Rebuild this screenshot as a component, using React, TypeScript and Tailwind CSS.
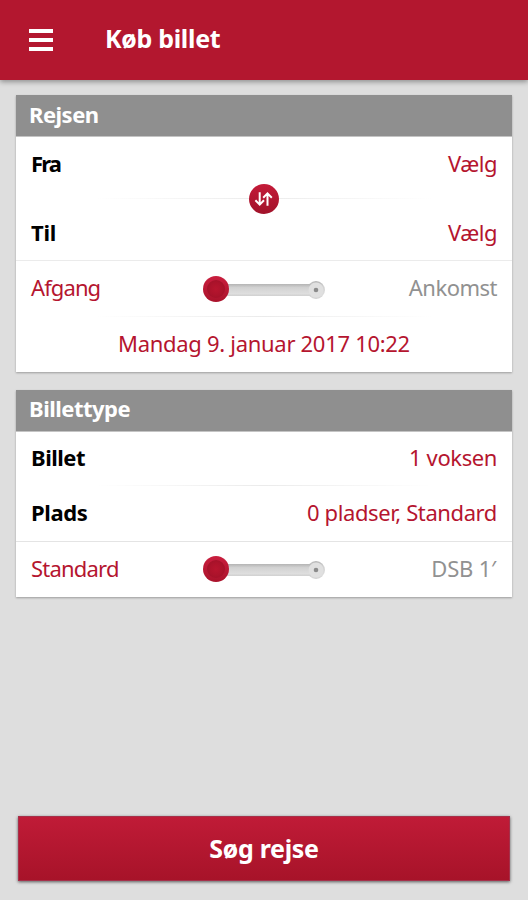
import { useState, type ReactNode } from "react";
import clsx from "clsx";

function Card({
  title,
  titleClassName = "pb-[4px]",
  children,
}: {
  title: ReactNode;
  titleClassName?: string;
  children: ReactNode;
}) {
  return (
    <section className="bg-white shadow-[0_1px_2px_rgba(0,0,0,0.3)]">
      <h2
        className={clsx(
          "flex h-[42px] items-center border-b border-[#c4c4c4] bg-[#8f8f8f] px-[13px] text-[22px] font-bold tracking-[-0.5px] text-white",
          titleClassName,
        )}
      >
        {title}
      </h2>
      {children}
    </section>
  );
}

function Row({
  label,
  value,
  className,
  labelClassName,
  valueClassName,
}: {
  label: string;
  value: string;
  className?: string;
  labelClassName?: string;
  valueClassName?: string;
}) {
  return (
    <button
      type="button"
      className={clsx("flex w-full items-center justify-between px-[15px]", className)}
    >
      <span className={clsx("font-bold text-black", labelClassName)}>{label}</span>
      <span className={clsx("text-[#b5152f]", valueClassName)}>{value}</span>
    </button>
  );
}

function FadeLine() {
  return (
    <div className="mx-[80px] h-px bg-linear-to-r from-transparent via-[#ebebeb] to-transparent" />
  );
}

function Toggle({
  left,
  right,
  leftClassName,
  rightClassName,
  trackClassName,
}: {
  left: string;
  right: string;
  leftClassName?: string;
  rightClassName?: string;
  trackClassName?: string;
}) {
  const [on, setOn] = useState(false);

  return (
    <div className="grid h-[55px] grid-cols-[1fr_124px_1fr] items-center px-[15px]">
      <span className={clsx("pb-[3px]", on ? "text-[#919191]" : "text-[#b5152f]", leftClassName)}>
        {left}
      </span>
      <button
        type="button"
        onClick={() => setOn(!on)}
        className={clsx(trackClassName, on && "rotate-180")}
      >
        <svg viewBox="0 0 124 28" className="block h-7 w-[124px]">
          <defs>
            <linearGradient id="track" x2="0" y2="1">
              <stop offset="0" stopColor="#b4b4b4" />
              <stop offset="0.3" stopColor="#d2d2d2" />
              <stop offset="0.8" stopColor="#dedede" />
              <stop offset="1" stopColor="#d0d0d0" />
            </linearGradient>
            <linearGradient id="knob" x2="0" y2="1">
              <stop offset="0" stopColor="#c91e3e" />
              <stop offset="1" stopColor="#aa132b" />
            </linearGradient>
            <radialGradient id="dent">
              <stop offset="0" stopColor="#b7152e" />
              <stop offset="0.7" stopColor="#ac132b" />
              <stop offset="1" stopColor="#a41229" />
            </radialGradient>
          </defs>
          <circle cx="114" cy="15" r="9" fill="url(#track)" />
          <rect x="14" y="9" width="98" height="12" fill="url(#track)" />
          <circle cx="114" cy="15" r="7.5" fill="#e0e0e0" />
          <circle cx="114" cy="15" r="2.3" fill="#8b8b8b" />
          <circle cx="14" cy="14" r="13" fill="url(#knob)" />
          <circle cx="14" cy="14" r="9" fill="url(#dent)" />
        </svg>
      </button>
      <span
        className={clsx(
          "pb-[3px] text-right",
          on ? "text-[#b5152f]" : "text-[#919191]",
          rightClassName,
        )}
      >
        {right}
      </span>
    </div>
  );
}

export default function App() {
  return (
    <div className="flex h-[900px] w-[528px] flex-col bg-[#dedede] font-['Noto_Sans',sans-serif] text-[22px] leading-none">
      <header className="flex h-20 items-center bg-[#b3172f] pb-[3px] pl-[29px] text-white shadow-[0_2px_5px_rgba(0,0,0,0.35)]">
        <button type="button" className="flex w-6 flex-col gap-[5px] pt-[3px]">
          <span className="h-1 w-full bg-white" />
          <span className="h-1 w-full bg-white" />
          <span className="h-1 w-full bg-white" />
        </button>
        <h1 className="ml-[52px] text-[25px] font-bold tracking-[-0.3px]">Køb billet</h1>
      </header>

      <main className="flex flex-col gap-[18px] px-4 pt-[15px]">
        <Card title="Rejsen">
          <div className="relative">
            <Row
              label="Fra"
              value="Vælg"
              className="h-[61px] pb-[10px]"
              labelClassName="tracking-[-1.9px]"
              valueClassName="tracking-[-0.5px]"
            />
            <FadeLine />
            <Row
              label="Til"
              value="Vælg"
              className="h-[61px] pt-[5px]"
              labelClassName="tracking-[-0.2px]"
              valueClassName="tracking-[-0.5px]"
            />
            <button
              type="button"
              className="absolute top-[47px] left-[233px] size-[30px] rounded-full bg-linear-to-b from-[#c41b39] to-[#a1122a]"
            >
              <svg
                viewBox="0 0 30 30"
                className="size-[30px]"
                fill="none"
                stroke="white"
                strokeWidth="2"
              >
                <path d="M10.7 8.2v12.3M6.4 16.3l4.3 4.3 4.3-4.3M18.5 21.8V9.5M14.2 13.7l4.3-4.3 4.3 4.3" />
              </svg>
            </button>
          </div>
          <div className="h-px bg-[#ebebeb]" />
          <Toggle
            left="Afgang"
            right="Ankomst"
            leftClassName="tracking-[-0.9px]"
            rightClassName="tracking-[-0.5px]"
            trackClassName="pt-px"
          />
          <FadeLine />
          <button
            type="button"
            className="flex h-[55px] w-full items-center justify-center pb-[3px] tracking-[-0.3px] text-[#b5152f]"
          >
            Mandag 9. januar 2017 10:22
          </button>
        </Card>

        <Card title="Billettype" titleClassName="pb-[6px]">
          <Row
            label="Billet"
            value="1 voksen"
            className="h-[53px] pb-[3px]"
            labelClassName="tracking-[-0.5px]"
            valueClassName="tracking-[-0.4px]"
          />
          <FadeLine />
          <Row
            label="Plads"
            value="0 pladser, Standard"
            className="h-[55px] pb-[3px]"
            labelClassName="tracking-[-0.4px]"
            valueClassName="tracking-[-0.4px]"
          />
          <div className="h-px bg-[#e4e4e4]" />
          <Toggle
            left="Standard"
            right="DSB 1′"
            leftClassName="tracking-[-0.8px]"
            rightClassName="pr-px tracking-[-0.2px]"
            trackClassName="pb-px"
          />
        </Card>
      </main>

      <footer className="mt-auto px-[18px] pb-[19px]">
        <button
          type="button"
          className="flex h-[65px] w-full items-center justify-center border border-[#a5304a] bg-linear-to-b from-[#c01b37] to-[#a71329] text-[25px] font-bold tracking-[-0.3px] text-white shadow-[0_1px_3px_rgba(0,0,0,0.6)]"
        >
          Søg rejse
        </button>
      </footer>
    </div>
  );
}
